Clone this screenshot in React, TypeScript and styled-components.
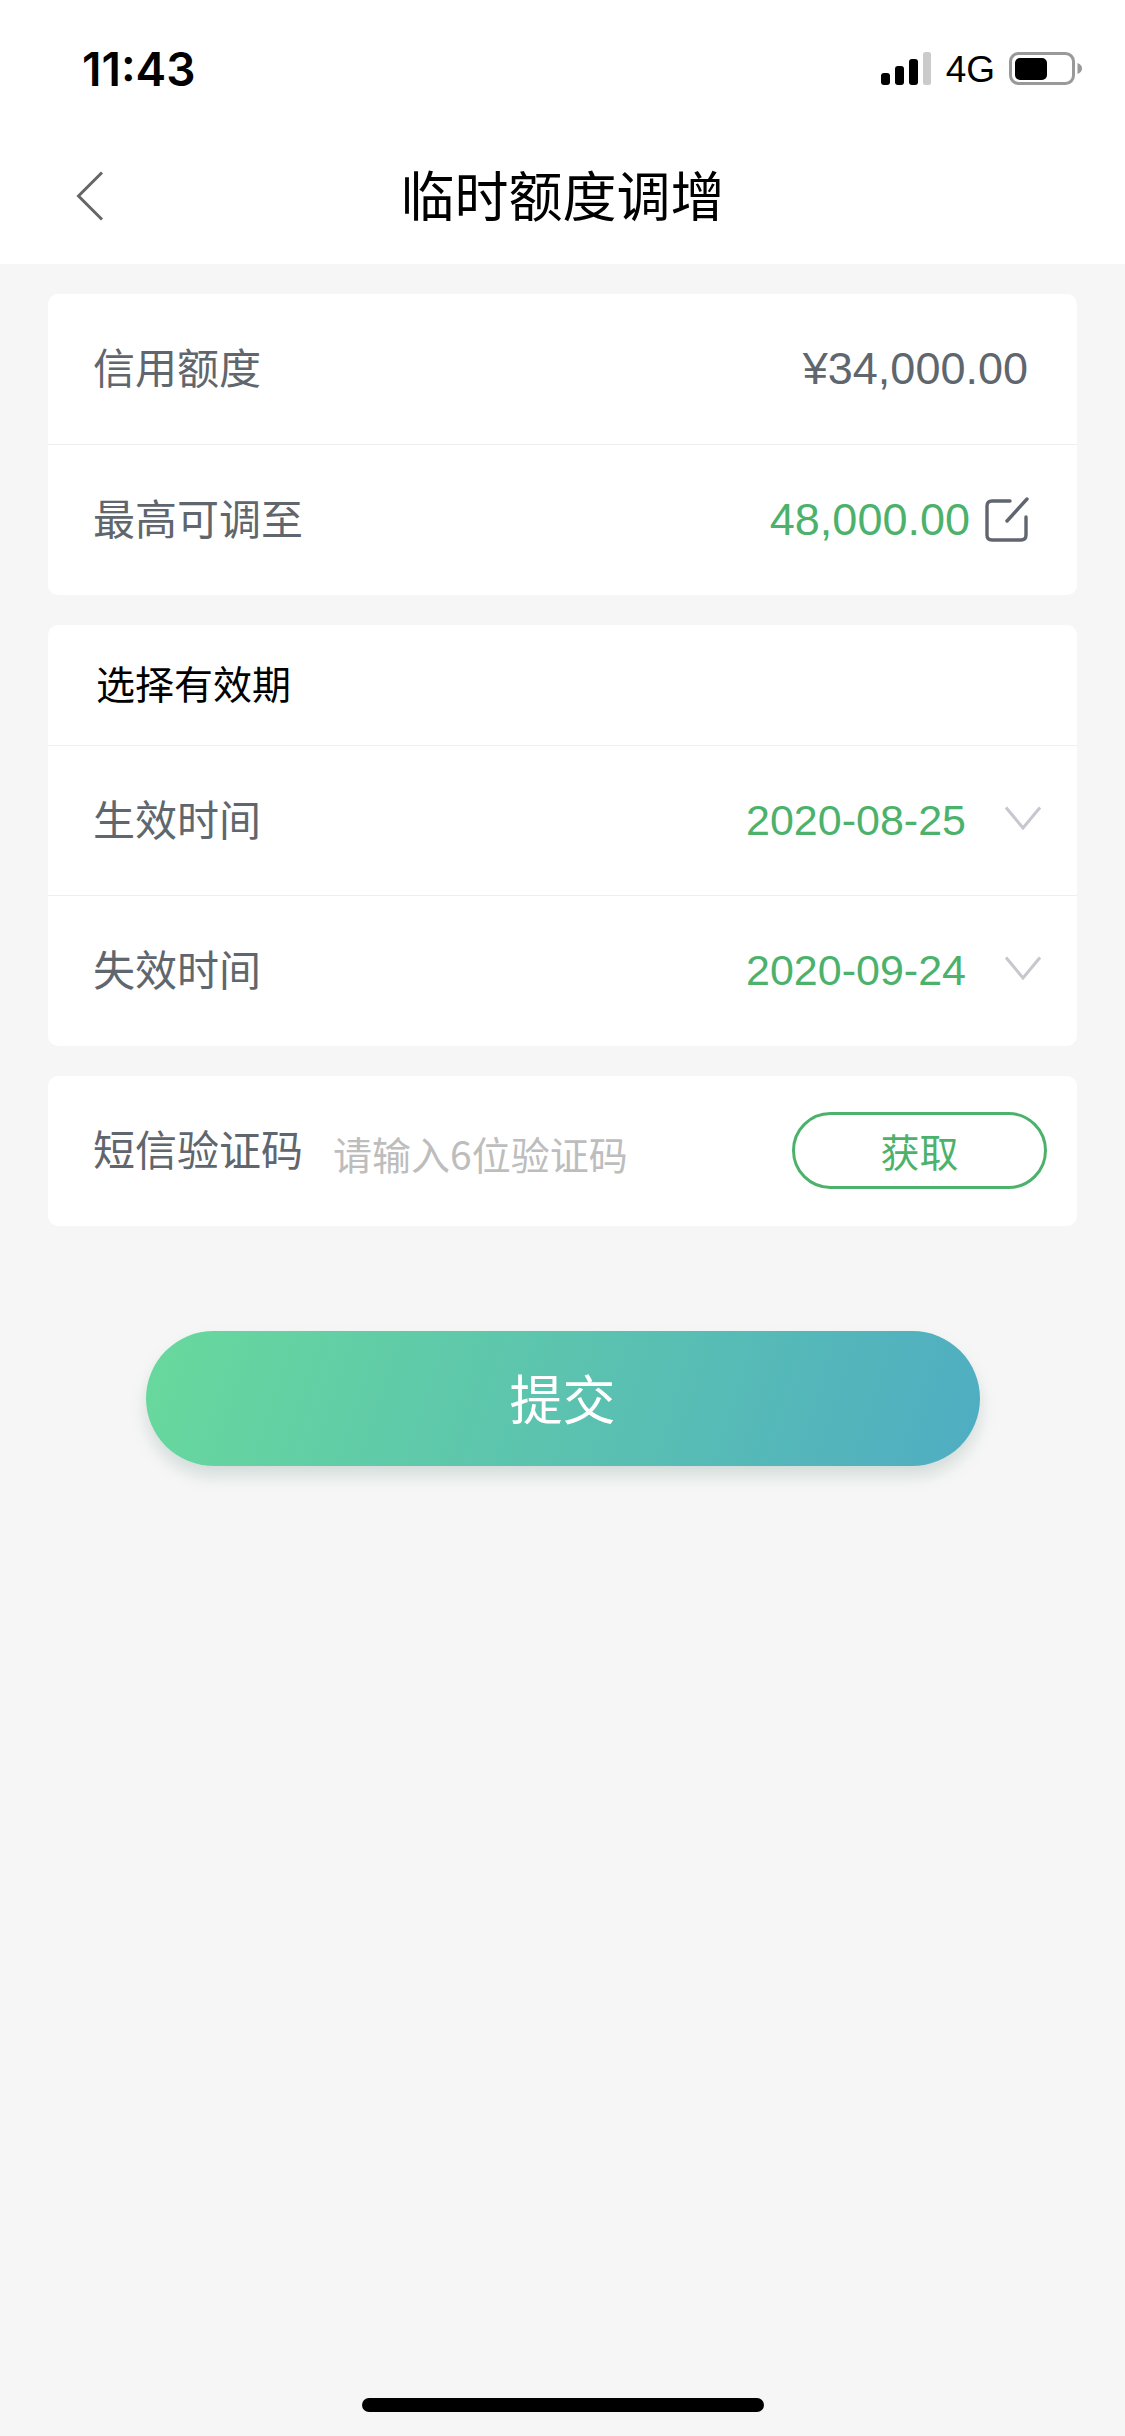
import React from 'react';
import styled, { createGlobalStyle } from 'styled-components';

const GlobalStyle = createGlobalStyle`
  html, body {
    margin: 0;
    padding: 0;
    background: #f6f6f6;
  }
  * {
    box-sizing: border-box;
  }
`;

const SignalIcon = () => (
  <svg width="52" height="34" viewBox="0 0 52 34">
    <rect x="1" y="21" width="9" height="12" rx="3" fill="#000" />
    <rect x="15" y="14" width="9" height="19" rx="3" fill="#000" />
    <rect x="29" y="7" width="9" height="26" rx="3" fill="#000" />
    <rect x="43" y="0" width="8" height="33" rx="2.5" fill="#cbcbcb" />
  </svg>
);

const BatteryIcon = () => (
  <svg width="74" height="34" viewBox="0 0 74 34">
    <rect x="1.5" y="1.5" width="63" height="30" rx="8" fill="none" stroke="#999" strokeWidth="3" />
    <rect x="6" y="6" width="32" height="22" rx="5" fill="#000" />
    <path d="M68.5 11 C71.5 12 73 14 73 16.5 C73 19 71.5 21 68.5 22 Z" fill="#999" />
  </svg>
);

const BackIcon = () => (
  <svg width="28" height="50" viewBox="0 0 28 50">
    <path d="M26 1.5 L2.5 25 L26 48.5" fill="none" stroke="#666" strokeWidth="3" />
  </svg>
);

const EditIcon = () => (
  <svg width="44" height="46" viewBox="0 0 44 46">
    <path
      d="M25 4 H7 Q2 4 2 9 V38 Q2 43 7 43 H36 Q41 43 41 38 V20"
      fill="none"
      stroke="#5f6670"
      strokeWidth="3.4"
      strokeLinecap="round"
    />
    <path d="M42 2 L22 24" fill="none" stroke="#5f6670" strokeWidth="3.4" strokeLinecap="round" />
  </svg>
);

const ChevronIcon = () => (
  <svg width="36" height="24" viewBox="0 0 36 24">
    <path d="M1 1.5 L18 22 L35 1.5" fill="none" stroke="#c6c8ce" strokeWidth="3" />
  </svg>
);

const App: React.FC = () => (
  <Page>
    <GlobalStyle />
    <Header>
      <StatusBar>
        <Clock>11:43</Clock>
        <StatusRight>
          <SignalIcon />
          <Network>4G</Network>
          <BatteryIcon />
        </StatusRight>
      </StatusBar>
      <NavBar>
        <BackButton>
          <BackIcon />
        </BackButton>
        <Title>临时额度调增</Title>
      </NavBar>
    </Header>

    <Content>
      <Card>
        <Row>
          <Label>信用额度</Label>
          <Amount>¥34,000.00</Amount>
        </Row>
        <Row>
          <Label>最高可调至</Label>
          <EditValue>
            <GreenValue>48,000.00</GreenValue>
            <EditIcon />
          </EditValue>
        </Row>
      </Card>

      <Card>
        <SectionRow>选择有效期</SectionRow>
        <Row>
          <Label>生效时间</Label>
          <DateValue>
            <DateText>2020-08-25</DateText>
            <ChevronWrap>
              <ChevronIcon />
            </ChevronWrap>
          </DateValue>
        </Row>
        <Row>
          <Label>失效时间</Label>
          <DateValue>
            <DateText>2020-09-24</DateText>
            <ChevronWrap>
              <ChevronIcon />
            </ChevronWrap>
          </DateValue>
        </Row>
      </Card>

      <Card>
        <CodeRow>
          <Label>短信验证码</Label>
          <Placeholder>请输入6位验证码</Placeholder>
          <FetchButton>获取</FetchButton>
        </CodeRow>
      </Card>

      <SubmitButton>提交</SubmitButton>
    </Content>

    <HomeBar />
  </Page>
);

const Page = styled.div`
  display: flex;
  flex-direction: column;
  width: 1125px;
  height: 2436px;
  overflow: hidden;
  background: #f6f6f6;
  font-family: 'Liberation Sans', 'Noto Sans CJK SC', sans-serif;
`;

const Header = styled.header`
  height: 264px;
  background: #fff;
`;

const StatusBar = styled.div`
  display: flex;
  justify-content: space-between;
  align-items: flex-end;
  height: 86px;
  padding: 0 42px 0 82px;
`;

const Clock = styled.span`
  font-family: Inter, 'Liberation Sans', sans-serif;
  font-size: 46px;
  font-weight: 600;
  line-height: 34px;
  color: #000;
`;

const StatusRight = styled.div`
  display: flex;
  align-items: flex-end;
  gap: 14px;
`;

const Network = styled.span`
  font-size: 37px;
  line-height: 33px;
  color: #000;
`;

const NavBar = styled.div`
  position: relative;
  display: flex;
  justify-content: center;
  align-items: center;
  height: 178px;
  padding-top: 38px;
`;

const BackButton = styled.span`
  position: absolute;
  left: 76px;
  top: 85px;
  line-height: 0;
`;

const Title = styled.h1`
  margin: 0;
  font-family: 'Noto Sans CJK SC', sans-serif;
  font-size: 54px;
  font-weight: 400;
  line-height: 64px;
  color: #000;
`;

const Content = styled.main`
  display: flex;
  flex-direction: column;
  gap: 30px;
  padding: 30px 48px 0;
`;

const Card = styled.section`
  padding-bottom: 1px;
  background: #fff;
  border-radius: 10px;
  overflow: hidden;
  & > * + * {
    border-top: 1px solid #eeeeee;
  }
`;

const Row = styled.div`
  display: flex;
  justify-content: space-between;
  align-items: center;
  height: 150px;
  padding: 0 49px 0 45px;
`;

const SectionRow = styled.div`
  display: flex;
  align-items: center;
  height: 120px;
  padding: 0 0 6px 48px;
  font-family: 'Noto Sans CJK SC', sans-serif;
  font-size: 39px;
  color: #000;
`;

const Label = styled.span`
  margin-bottom: 7px;
  font-family: 'Noto Sans CJK SC', sans-serif;
  font-size: 42px;
  color: #60666d;
`;

const Amount = styled.span`
  font-size: 45px;
  color: #60666d;
`;

const GreenValue = styled.span`
  font-size: 45px;
  color: #4cb26b;
`;

const DateText = styled(GreenValue)`
  font-size: 43px;
`;

const EditValue = styled.div`
  display: flex;
  align-items: center;
  gap: 15px;
  margin-right: -1px;
`;

const DateValue = styled.div`
  display: flex;
  align-items: center;
  gap: 39px;
  margin-right: -13px;
`;

const ChevronWrap = styled.span`
  display: flex;
  margin-top: -6px;
`;

const CodeRow = styled(Row)`
  justify-content: flex-start;
  height: 149px;
  padding-right: 30px;
`;

const Placeholder = styled.span`
  flex: 1;
  margin: 4px 0 0 30px;
  font-family: 'Noto Sans CJK SC', sans-serif;
  font-size: 39px;
  color: #bdbdbd;
`;

const FetchButton = styled.button`
  width: 255px;
  height: 77px;
  padding: 0;
  background: #fff;
  border: 3px solid #4cb26b;
  border-radius: 39px;
  font-family: 'Noto Sans CJK SC', sans-serif;
  font-size: 39px;
  line-height: 1;
  color: #4cb26b;
`;

const SubmitButton = styled.button`
  align-self: center;
  width: 834px;
  height: 135px;
  margin-top: 75px;
  padding: 0 0 2px;
  border: 0;
  border-radius: 68px;
  background: linear-gradient(108deg, #68d99c 0%, #4fadc2 100%);
  box-shadow: 0 10px 16px rgba(90, 130, 125, 0.22);
  font-family: 'Noto Sans CJK SC', sans-serif;
  font-size: 53px;
  line-height: 1;
  color: #fff;
`;

const HomeBar = styled.div`
  align-self: center;
  width: 402px;
  height: 14px;
  margin-top: auto;
  margin-bottom: 24px;
  border-radius: 7px;
  background: #000;
`;

export default App;
